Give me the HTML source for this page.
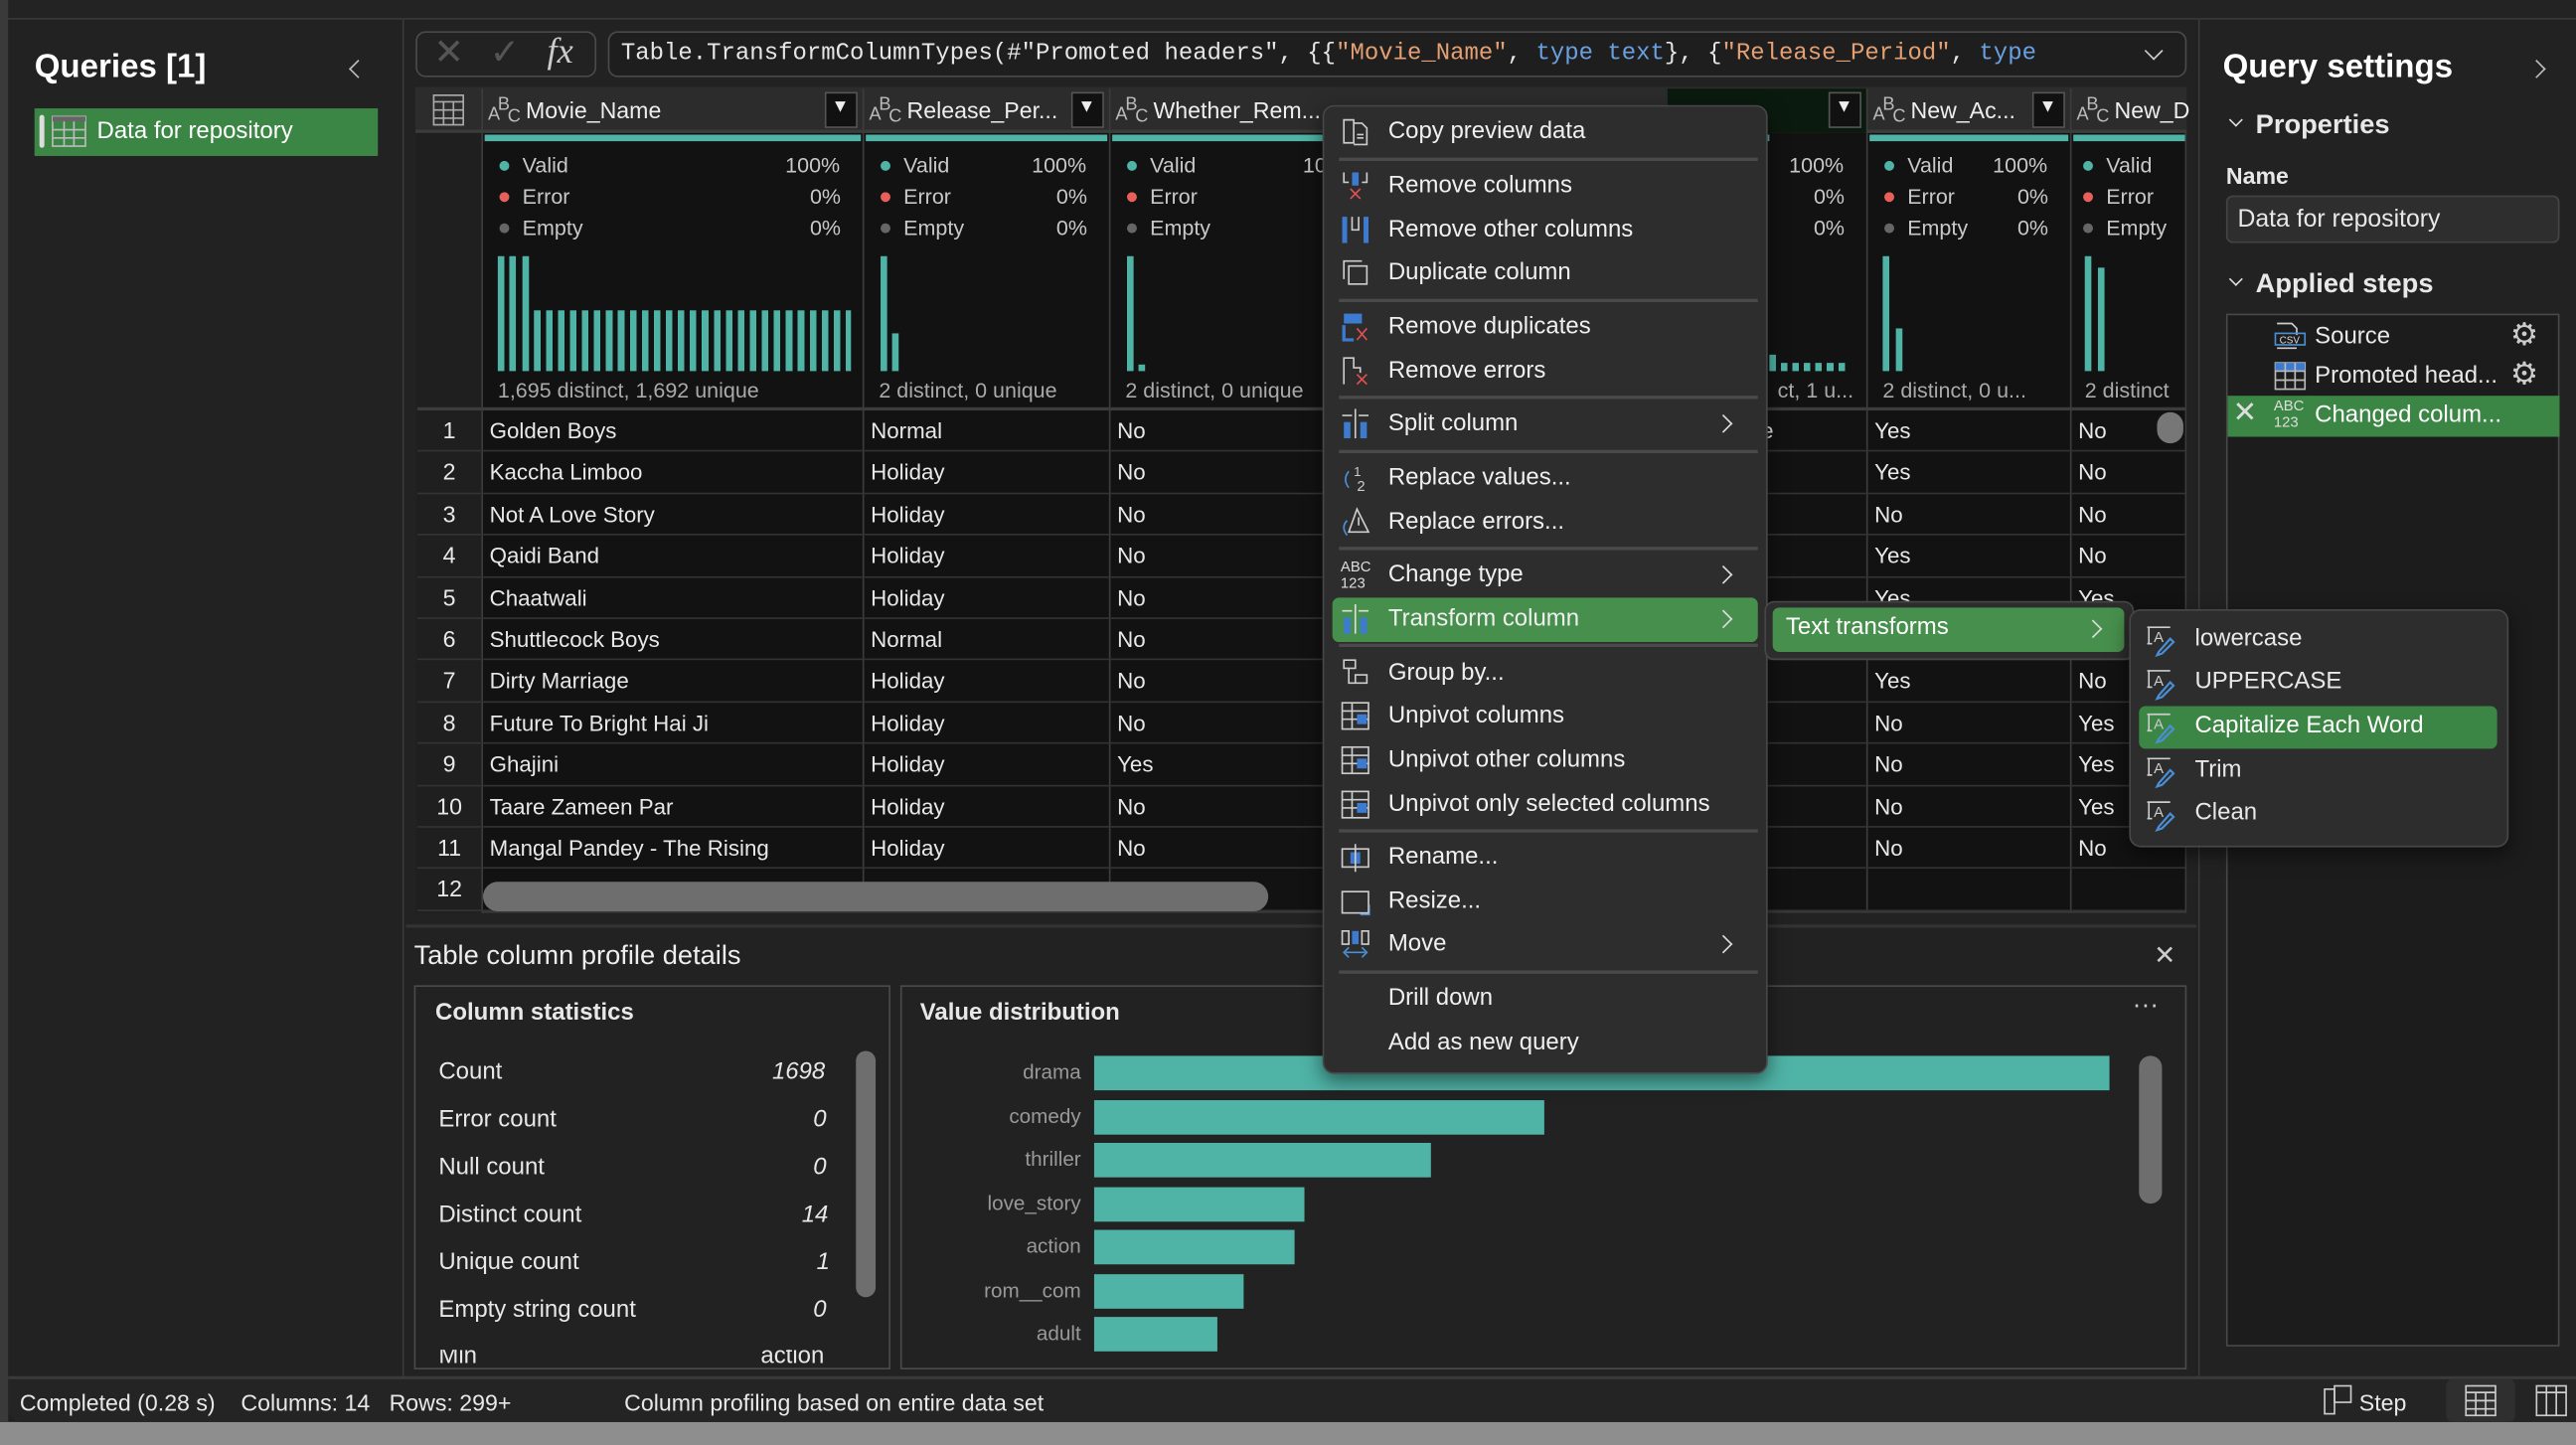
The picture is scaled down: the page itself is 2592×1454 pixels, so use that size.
<!DOCTYPE html>
<html><head><meta charset="utf-8">
<style>
*{box-sizing:border-box;margin:0;padding:0}
html,body{width:2592px;height:1454px;overflow:hidden;background:#8a8a8a}
#s{position:absolute;left:0;top:0;width:1568px;height:880px;transform:scale(1.65306,1.65227);transform-origin:0 0;font-family:"Liberation Sans",sans-serif;color:#e8e8e8;font-size:14px;background:#202020}
.a{position:absolute}
.t{position:absolute;white-space:nowrap}
.bx{position:absolute;border:1px solid #4a4a4a}
.teal{background:#4fb3a6}
.cell{position:absolute;height:25px;line-height:25px;white-space:nowrap;font-size:13.5px;padding-left:4px;color:#e8e8e8}
.mi{position:absolute;left:845px;height:20px;line-height:20px;font-size:14.5px;white-space:nowrap;color:#f0f0f0}
.ms{position:absolute;left:815px;width:255px;height:2px;background:#4a4a4a}
.ic{position:absolute;left:816px;width:18px;height:18px}
.chev{position:absolute;width:8px;height:8px;border-right:1.5px solid #ddd;border-top:1.5px solid #ddd;transform:rotate(45deg)}
.dot{display:inline-block;width:6px;height:6px;border-radius:3px;margin-right:8px;vertical-align:1px}
.pr{position:absolute;font-size:13px;color:#c8c8c8;white-space:nowrap}
.abc{position:absolute;width:20px;height:20px;color:#bbb;font-size:11px}
.abc b{position:absolute;font-weight:normal}
.hd{position:absolute;top:59px;font-size:14px;color:#eee;white-space:nowrap}
</style></head><body><div id="s">
<div class="a" style="left:0;top:866px;width:1568px;height:14px;background:#8e8e8e"></div>
<div class="a" style="left:0;top:0;width:1568px;height:12px;background:#232323;border-bottom:1px solid #3a3a3a"></div>
<div class="a" style="left:0;top:0;width:5px;height:866px;background:#3a3a3a"></div>
<div class="a" style="left:5px;top:12px;width:241px;height:826px;background:#222;border-right:1px solid #3a3a3a"></div>
<div class="t" style="left:21px;top:30px;font-size:20px;font-weight:bold;color:#fff">Queries [1]</div>
<div class="chev" style="left:214px;top:38px;transform:rotate(-135deg);border-color:#bbb"></div>
<div class="a" style="left:21px;top:66px;width:209px;height:29px;background:#3c8645"></div>
<div class="a" style="left:24px;top:70px;width:3px;height:20px;background:#ddd;border-radius:2px"></div>
<svg class="a" style="left:31px;top:70px" width="22" height="20"><rect x="1" y="1" width="20" height="18" fill="none" stroke="#bbb"/><rect x="1" y="1" width="20" height="3" fill="#666"/><path d="M1 9H21M1 14H21M8 4V19M14 4V19" stroke="#bbb"/></svg>
<div class="t" style="left:59px;top:72px;font-size:14.5px;color:#fff">Data for repository</div>
<div class="a" style="left:247px;top:12px;width:1090px;height:826px;background:#222"></div>
<div class="a" style="left:253px;top:19px;width:110px;height:28px;border:1px solid #4a4a4a;border-radius:6px"></div>
<div class="t" style="left:264px;top:19px;font-size:22px;color:#555">✕</div>
<div class="t" style="left:298px;top:19px;font-size:22px;color:#555">✓</div>
<div class="t" style="left:333px;top:18px;font-size:22px;font-style:italic;font-family:'Liberation Serif',serif;color:#ccc">fx</div>
<div class="a" style="left:370px;top:19px;width:961px;height:28px;border:1px solid #4a4a4a;border-radius:6px;background:#1e1e1e"></div>
<div class="t" style="left:378px;top:25px;font-family:'Liberation Mono',monospace;font-size:14.5px;color:#e6e6e6">Table.TransformColumnTypes(#"Promoted headers", {{<span style="color:#e4a073">"Movie_Name"</span>, <span style="color:#6aa0e0">type</span> <span style="color:#6aa0e0">text</span>}, {<span style="color:#e4a073">"Release_Period"</span>, <span style="color:#6aa0e0">type</span></div>
<div class="chev" style="left:1307px;top:27px;transform:rotate(135deg);border-color:#ccc"></div>
<div class="a" style="left:253px;top:53px;width:1078px;height:503px;background:#121212;border:1px solid #3c3c3c"></div>
<div class="a" style="left:253px;top:53px;width:1078px;height:28px;background:#2c2c2c;border-bottom:2px solid #3c3c3c"></div>
<div class="a" style="left:253px;top:81px;width:40px;height:475px;background:#1f1f1f"></div>
<svg class="a" style="left:263px;top:57px" width="20" height="20"><rect x="1" y="1" width="18" height="18" fill="none" stroke="#aaa"/><path d="M1 5H19M1 10H19M1 15H19M7 5V19M13 5V19" stroke="#aaa"/></svg>
<div class="a" style="left:1015px;top:54px;width:121px;height:27px;background:#0b1a0e"></div>
<div class="abc" style="left:297px;top:58px"><b style="left:0;top:6px">A</b><b style="left:6px;top:0">B</b><b style="left:12px;top:7px">C</b></div>
<div class="hd" style="left:320px">Movie_Name</div>
<div class="a" style="left:502px;top:56px;width:20px;height:22px;background:#111;border:1px solid #555"></div><div class="t" style="left:506px;top:59px;font-size:11px;color:#eee">▼</div>
<div class="abc" style="left:529px;top:58px"><b style="left:0;top:6px">A</b><b style="left:6px;top:0">B</b><b style="left:12px;top:7px">C</b></div>
<div class="hd" style="left:552px">Release_Per...</div>
<div class="a" style="left:652px;top:56px;width:20px;height:22px;background:#111;border:1px solid #555"></div><div class="t" style="left:656px;top:59px;font-size:11px;color:#eee">▼</div>
<div class="abc" style="left:679px;top:58px"><b style="left:0;top:6px">A</b><b style="left:6px;top:0">B</b><b style="left:12px;top:7px">C</b></div>
<div class="hd" style="left:702px">Whether_Rem...</div>
<div class="a" style="left:1113px;top:56px;width:20px;height:22px;background:#111;border:1px solid #555"></div><div class="t" style="left:1117px;top:59px;font-size:11px;color:#eee">▼</div>
<div class="abc" style="left:1140px;top:58px"><b style="left:0;top:6px">A</b><b style="left:6px;top:0">B</b><b style="left:12px;top:7px">C</b></div>
<div class="hd" style="left:1163px">New_Ac...</div>
<div class="a" style="left:1237px;top:56px;width:20px;height:22px;background:#111;border:1px solid #555"></div><div class="t" style="left:1241px;top:59px;font-size:11px;color:#eee">▼</div>
<div class="abc" style="left:1264px;top:58px"><b style="left:0;top:6px">A</b><b style="left:6px;top:0">B</b><b style="left:12px;top:7px">C</b></div>
<div class="hd" style="left:1287px">New_D</div>
<div class="a" style="left:293px;top:54px;width:1px;height:502px;background:#3c3c3c"></div>
<div class="a" style="left:525px;top:54px;width:1px;height:502px;background:#3c3c3c"></div>
<div class="a" style="left:675px;top:54px;width:1px;height:502px;background:#3c3c3c"></div>
<div class="a" style="left:1136px;top:54px;width:1px;height:502px;background:#3c3c3c"></div>
<div class="a" style="left:1260px;top:54px;width:1px;height:502px;background:#3c3c3c"></div>
<div class="a teal" style="left:295px;top:82px;width:229px;height:4px"></div>
<div class="a teal" style="left:527px;top:82px;width:147px;height:4px"></div>
<div class="a teal" style="left:677px;top:82px;width:400px;height:4px"></div>
<div class="a teal" style="left:1138px;top:82px;width:121px;height:4px"></div>
<div class="a teal" style="left:1262px;top:82px;width:68px;height:4px"></div>
<div class="pr" style="left:304px;top:93px"><span class="dot" style="background:#4fb3a6"></span>Valid</div><div class="pr" style="left:478px;top:93px">100%</div>
<div class="pr" style="left:304px;top:112px"><span class="dot" style="background:#e8605a"></span>Error</div><div class="pr" style="left:493px;top:112px">0%</div>
<div class="pr" style="left:304px;top:131px"><span class="dot" style="background:#666"></span>Empty</div><div class="pr" style="left:493px;top:131px">0%</div>
<div class="pr" style="left:536px;top:93px"><span class="dot" style="background:#4fb3a6"></span>Valid</div><div class="pr" style="left:628px;top:93px">100%</div>
<div class="pr" style="left:536px;top:112px"><span class="dot" style="background:#e8605a"></span>Error</div><div class="pr" style="left:643px;top:112px">0%</div>
<div class="pr" style="left:536px;top:131px"><span class="dot" style="background:#666"></span>Empty</div><div class="pr" style="left:643px;top:131px">0%</div>
<div class="pr" style="left:686px;top:93px"><span class="dot" style="background:#4fb3a6"></span>Valid</div><div class="pr" style="left:793px;top:93px">10</div>
<div class="pr" style="left:686px;top:112px"><span class="dot" style="background:#e8605a"></span>Error</div>
<div class="pr" style="left:686px;top:131px"><span class="dot" style="background:#666"></span>Empty</div>
<div class="pr" style="left:1089px;top:93px">100%</div><div class="pr" style="left:1104px;top:112px">0%</div><div class="pr" style="left:1104px;top:131px">0%</div>
<div class="pr" style="left:1147px;top:93px"><span class="dot" style="background:#4fb3a6"></span>Valid</div><div class="pr" style="left:1213px;top:93px">100%</div>
<div class="pr" style="left:1147px;top:112px"><span class="dot" style="background:#e8605a"></span>Error</div><div class="pr" style="left:1228px;top:112px">0%</div>
<div class="pr" style="left:1147px;top:131px"><span class="dot" style="background:#666"></span>Empty</div><div class="pr" style="left:1228px;top:131px">0%</div>
<div class="pr" style="left:1268px;top:93px"><span class="dot" style="background:#4fb3a6"></span>Valid</div>
<div class="pr" style="left:1268px;top:112px"><span class="dot" style="background:#e8605a"></span>Error</div>
<div class="pr" style="left:1268px;top:131px"><span class="dot" style="background:#666"></span>Empty</div>
<div class="a teal" style="left:303px;top:156px;width:4px;height:70px"></div>
<div class="a teal" style="left:310px;top:156px;width:4px;height:70px"></div>
<div class="a teal" style="left:318px;top:156px;width:4px;height:70px"></div>
<div class="a" style="left:325px;top:189px;width:193px;height:37px;background:repeating-linear-gradient(90deg,#4fb3a6 0 4px,transparent 4px 7.3px)"></div>
<div class="a teal" style="left:536px;top:156px;width:4px;height:70px"></div>
<div class="a teal" style="left:543px;top:203px;width:4px;height:23px"></div>
<div class="a teal" style="left:686px;top:156px;width:4px;height:70px"></div>
<div class="a teal" style="left:693px;top:222px;width:4px;height:4px"></div>
<div class="a teal" style="left:1077px;top:216px;width:4px;height:10px"></div>
<div class="a" style="left:1084px;top:221px;width:42px;height:5px;background:repeating-linear-gradient(90deg,#4fb3a6 0 4px,transparent 4px 7px)"></div>
<div class="a teal" style="left:1146px;top:156px;width:4px;height:70px"></div>
<div class="a teal" style="left:1154px;top:200px;width:4px;height:26px"></div>
<div class="a teal" style="left:1269px;top:156px;width:4px;height:70px"></div>
<div class="a teal" style="left:1277px;top:163px;width:4px;height:63px"></div>
<div class="pr" style="left:303px;top:230px;color:#aaa">1,695 distinct, 1,692 unique</div>
<div class="pr" style="left:535px;top:230px;color:#aaa">2 distinct, 0 unique</div>
<div class="pr" style="left:685px;top:230px;color:#aaa">2 distinct, 0 unique</div>
<div class="pr" style="left:1082px;top:230px;color:#aaa">ct, 1 u...</div>
<div class="pr" style="left:1146px;top:230px;color:#aaa">2 distinct, 0 u...</div>
<div class="pr" style="left:1269px;top:230px;color:#aaa">2 distinct</div>
<div class="a" style="left:254px;top:248px;width:1076px;height:2px;background:#3c3c3c"></div>
<div id="rows"></div>
<div class="a" style="left:1313px;top:251px;width:16px;height:19px;border-radius:8px;background:#777"></div>
<div class="a" style="left:294px;top:537px;width:478px;height:18px;border-radius:9px;background:#6e6e6e"></div>
<div class="a" style="left:247px;top:563px;width:1090px;height:2px;background:#333"></div>
<div class="t" style="left:252px;top:573px;font-size:16.5px;color:#eee">Table column profile details</div>
<div class="t" style="left:1311px;top:572px;font-size:16px;color:#ccc">✕</div>
<div class="bx" style="left:252px;top:600px;width:290px;height:234px"></div>
<div class="t" style="left:265px;top:609px;font-size:14.5px;font-weight:bold">Column statistics</div>
<div class="a" style="left:521px;top:640px;width:12px;height:150px;border-radius:6px;background:#6e6e6e"></div>
<div class="bx" style="left:548px;top:600px;width:783px;height:234px"></div>
<div class="t" style="left:560px;top:609px;font-size:14.5px;font-weight:bold">Value distribution</div>
<div class="t" style="left:1298px;top:604px;font-size:16px;color:#ccc">···</div>
<div class="a" style="left:1302px;top:643px;width:14px;height:90px;border-radius:7px;background:#6e6e6e"></div>
<div class="t" style="left:267px;top:645px;font-size:14.5px">Count</div><div class="t" style="left:470px;top:645px;font-size:14.5px;font-style:italic">1698</div>
<div class="t" style="left:267px;top:674px;font-size:14.5px">Error count</div><div class="t" style="left:495px;top:674px;font-size:14.5px;font-style:italic">0</div>
<div class="t" style="left:267px;top:703px;font-size:14.5px">Null count</div><div class="t" style="left:495px;top:703px;font-size:14.5px;font-style:italic">0</div>
<div class="t" style="left:267px;top:732px;font-size:14.5px">Distinct count</div><div class="t" style="left:488px;top:732px;font-size:14.5px;font-style:italic">14</div>
<div class="t" style="left:267px;top:761px;font-size:14.5px">Unique count</div><div class="t" style="left:497px;top:761px;font-size:14.5px;font-style:italic">1</div>
<div class="t" style="left:267px;top:790px;font-size:14.5px">Empty string count</div><div class="t" style="left:495px;top:790px;font-size:14.5px;font-style:italic">0</div>
<div class="a" style="left:253px;top:822px;width:287px;height:11px;overflow:hidden"><div class="t" style="left:14px;top:-4px;font-size:14.5px">Min</div><div class="t" style="left:210px;top:-4px;font-size:14.5px">action</div></div>
<div class="t" style="left:620px;top:646px;font-size:12.5px;color:#999;width:38px;text-align:right">drama</div><div class="a teal" style="left:666px;top:643px;width:618px;height:21px"></div>
<div class="t" style="left:600px;top:673px;font-size:12.5px;color:#999;width:58px;text-align:right">comedy</div><div class="a teal" style="left:666px;top:670px;width:274px;height:21px"></div>
<div class="t" style="left:600px;top:699px;font-size:12.5px;color:#999;width:58px;text-align:right">thriller</div><div class="a teal" style="left:666px;top:696px;width:205px;height:21px"></div>
<div class="t" style="left:580px;top:726px;font-size:12.5px;color:#999;width:78px;text-align:right">love_story</div><div class="a teal" style="left:666px;top:723px;width:128px;height:21px"></div>
<div class="t" style="left:600px;top:752px;font-size:12.5px;color:#999;width:58px;text-align:right">action</div><div class="a teal" style="left:666px;top:749px;width:122px;height:21px"></div>
<div class="t" style="left:580px;top:779px;font-size:12.5px;color:#999;width:78px;text-align:right">rom__com</div><div class="a teal" style="left:666px;top:776px;width:91px;height:21px"></div>
<div class="t" style="left:600px;top:805px;font-size:12.5px;color:#999;width:58px;text-align:right">adult</div><div class="a teal" style="left:666px;top:802px;width:75px;height:21px"></div>
<div class="a" style="left:1338px;top:12px;width:230px;height:826px;background:#222;border-left:1px solid #3a3a3a"></div>
<div class="t" style="left:1353px;top:30px;font-size:20px;font-weight:bold;color:#fff">Query settings</div>
<div class="chev" style="left:1540px;top:38px;border-color:#bbb"></div>
<div class="chev" style="left:1358px;top:70px;transform:rotate(135deg);width:6px;height:6px"></div>
<div class="t" style="left:1373px;top:67px;font-size:16.5px;font-weight:bold">Properties</div>
<div class="t" style="left:1355px;top:99px;font-size:14px;font-weight:bold">Name</div>
<div class="a" style="left:1355px;top:119px;width:203px;height:29px;background:#2e2e2e;border:1px solid #444;border-radius:4px"></div>
<div class="t" style="left:1362px;top:125px;font-size:15px">Data for repository</div>
<div class="chev" style="left:1358px;top:167px;transform:rotate(135deg);width:6px;height:6px"></div>
<div class="t" style="left:1373px;top:164px;font-size:16.5px;font-weight:bold">Applied steps</div>
<div class="bx" style="left:1355px;top:191px;width:203px;height:629px;background:#1c1c1c;border-color:#484848"></div>
<svg class="a" style="left:1384px;top:196px" width="20" height="18"><path d="M2 1H11L14 4V8" fill="none" stroke="#ccc"/><rect x="1" y="7" width="18" height="7" fill="none" stroke="#4a8fd6"/><text x="3.5" y="13" font-size="6" fill="#ddd" font-family="Liberation Sans">CSV</text><path d="M2 16H14" stroke="#ccc"/></svg>
<div class="t" style="left:1409px;top:197px;font-size:14.5px">Source</div>
<div class="t" style="left:1528px;top:193px;font-size:19px;color:#ccc">⚙</div>
<svg class="a" style="left:1384px;top:220px" width="20" height="18"><rect x="1" y="1" width="18" height="16" fill="none" stroke="#bbb"/><rect x="1" y="1" width="18" height="5" fill="#3d7bd0"/><path d="M1 6H19M1 11.5H19M7 1V17M13 1V17" stroke="#bbb"/></svg>
<div class="t" style="left:1409px;top:221px;font-size:14.5px">Promoted head...</div>
<div class="t" style="left:1528px;top:217px;font-size:19px;color:#ccc">⚙</div>
<div class="a" style="left:1356px;top:241px;width:202px;height:25px;background:#3c8645"></div>
<div class="t" style="left:1359px;top:241px;font-size:18px;color:#ddd">✕</div>
<div class="t" style="left:1384px;top:242px;font-size:9px;line-height:10px;color:#ddd">ABC<br>123</div>
<div class="t" style="left:1409px;top:245px;font-size:14.5px;color:#fff">Changed colum...</div>
<div class="a" style="left:5px;top:838px;width:1563px;height:28px;background:#242424;border-top:2px solid #3a3a3a;border-radius:0 0 0 8px"></div>
<div class="t" style="left:12px;top:846px;font-size:14px">Completed (0.28 s)&nbsp;&nbsp;&nbsp; Columns: 14&nbsp;&nbsp; Rows: 299+</div>
<div class="t" style="left:380px;top:846px;font-size:14px">Column profiling based on entire data set</div>
<svg class="a" style="left:1413px;top:843px" width="20" height="20"><rect x="2" y="3" width="6" height="15" fill="none" stroke="#ccc"/><rect x="8" y="1" width="10" height="10" fill="none" stroke="#ccc"/></svg>
<div class="t" style="left:1436px;top:846px;font-size:14px">Step</div>
<div class="a" style="left:1489px;top:840px;width:42px;height:26px;background:#2f2f2f;border-radius:4px"></div>
<svg class="a" style="left:1500px;top:843px" width="20" height="20"><rect x="1" y="1" width="18" height="18" fill="none" stroke="#ccc"/><path d="M1 5H19M1 10H19M1 15H19M7 5V19M13 5V19" stroke="#ccc"/></svg>
<svg class="a" style="left:1543px;top:843px" width="20" height="20"><rect x="1" y="1" width="18" height="18" fill="none" stroke="#ccc"/><path d="M1 5H19M7 1V19M13 1V19" stroke="#ccc"/></svg>

<div class="a" style="left:805px;top:64px;width:271px;height:590px;background:#2d2d2d;border:1px solid #474747;border-radius:7px;box-shadow:0 4px 12px rgba(0,0,0,.5)"></div>
<div class="ms" style="top:96px"></div><div class="ms" style="top:182px"></div><div class="ms" style="top:241px"></div><div class="ms" style="top:274px"></div><div class="ms" style="top:333px"></div><div class="ms" style="top:392px"></div><div class="ms" style="top:505px"></div><div class="ms" style="top:591px"></div>
<div class="a" style="left:811px;top:364px;width:259px;height:27px;background:#478f4c;border-radius:4px"></div>
<div class="mi" style="top:70px">Copy preview data</div>
<div class="mi" style="top:103px">Remove columns</div>
<div class="mi" style="top:130px">Remove other columns</div>
<div class="mi" style="top:156px">Duplicate column</div>
<div class="mi" style="top:189px">Remove duplicates</div>
<div class="mi" style="top:216px">Remove errors</div>
<div class="mi" style="top:248px">Split column</div>
<div class="mi" style="top:281px">Replace values...</div>
<div class="mi" style="top:308px">Replace errors...</div>
<div class="mi" style="top:340px">Change type</div>
<div class="mi" style="top:367px">Transform column</div>
<div class="mi" style="top:400px">Group by...</div>
<div class="mi" style="top:426px">Unpivot columns</div>
<div class="mi" style="top:453px">Unpivot other columns</div>
<div class="mi" style="top:480px">Unpivot only selected columns</div>
<div class="mi" style="top:512px">Rename...</div>
<div class="mi" style="top:539px">Resize...</div>
<div class="mi" style="top:565px">Move</div>
<div class="mi" style="top:598px">Drill down</div>
<div class="mi" style="top:625px">Add as new query</div>
<div class="chev" style="left:1045px;top:254px"></div>
<div class="chev" style="left:1045px;top:346px"></div>
<div class="chev" style="left:1045px;top:373px"></div>
<div class="chev" style="left:1045px;top:571px"></div>
<svg class="ic" style="top:71px" viewBox="0 0 18 18"><path d="M2 2H8V16H2Z M8 4H13L16 7V17H8" fill="none" stroke="#ccc"/><path d="M10 11H14M10 13H14" stroke="#ccc"/></svg>
<svg class="ic" style="top:104px" viewBox="0 0 18 18"><path d="M2 1V7H5M16 1V7H13" fill="none" stroke="#ccc"/><rect x="7" y="1" width="4" height="8" fill="#3d7bd0"/><path d="M6 11L12 17M12 11L6 17" stroke="#e05050"/></svg>
<svg class="ic" style="top:131px" viewBox="0 0 18 18"><rect x="1" y="1" width="3" height="16" fill="#3d7bd0"/><rect x="14" y="1" width="3" height="16" fill="#3d7bd0"/><path d="M7 1V9H11V1" fill="none" stroke="#ccc"/></svg>
<svg class="ic" style="top:157px" viewBox="0 0 18 18"><path d="M2 13V2H13" fill="none" stroke="#ccc"/><rect x="5" y="5" width="11" height="11" fill="none" stroke="#ccc"/></svg>
<svg class="ic" style="top:190px" viewBox="0 0 18 18"><rect x="2" y="1" width="11" height="6" fill="#3d7bd0"/><path d="M2 8V17H8" fill="none" stroke="#3d7bd0" stroke-width="2"/><path d="M10 10L16 17M16 10L10 17" stroke="#e05050"/></svg>
<svg class="ic" style="top:217px" viewBox="0 0 18 18"><path d="M2 17V1H8V7H12V10" fill="none" stroke="#ccc"/><path d="M10 11L16 17M16 11L10 17" stroke="#e05050"/></svg>
<svg class="ic" style="top:249px" viewBox="0 0 18 18"><rect x="2" y="8" width="4" height="10" fill="#3d7bd0"/><rect x="12" y="8" width="4" height="10" fill="#3d7bd0"/><path d="M9 0V18M1 4H7M11 4H17" stroke="#ccc"/></svg>
<svg class="ic" style="top:282px" viewBox="0 0 18 18"><path d="M5 5Q1 10 5 15" fill="none" stroke="#4a8fd6"/><text x="8" y="8" font-size="8" fill="#ccc">1</text><text x="10" y="17" font-size="9" fill="#ccc">2</text></svg>
<svg class="ic" style="top:309px" viewBox="0 0 18 18"><path d="M4 8Q0 12 4 17" fill="none" stroke="#4a8fd6"/><path d="M10 1L17 15H5Z" fill="none" stroke="#ccc"/><path d="M11 6V11" stroke="#ccc"/></svg>
<div class="t" style="left:816px;top:340px;font-size:9px;line-height:10px;color:#ddd">ABC<br>123</div>
<svg class="ic" style="top:368px" viewBox="0 0 18 18"><rect x="2" y="8" width="4" height="10" fill="#3d7bd0"/><rect x="12" y="8" width="4" height="10" fill="#3d7bd0"/><path d="M9 0V18M1 4H7M11 4H17" stroke="#ddd"/></svg>
<svg class="ic" style="top:401px" viewBox="0 0 18 18"><path d="M2 1H9V6H2ZM5 6V15H16V10H9V15" fill="none" stroke="#ccc"/></svg>
<svg class="ic" style="top:427px" viewBox="0 0 18 18"><rect x="1" y="1" width="16" height="16" fill="none" stroke="#ccc"/><path d="M1 6H17M1 11H17M7 1V17" stroke="#ccc"/><rect x="10" y="8" width="6" height="6" fill="#3d7bd0"/></svg>
<svg class="ic" style="top:454px" viewBox="0 0 18 18"><rect x="1" y="1" width="16" height="16" fill="none" stroke="#ccc"/><path d="M1 6H17M1 11H17M7 1V17" stroke="#ccc"/><rect x="10" y="8" width="6" height="6" fill="#3d7bd0"/></svg>
<svg class="ic" style="top:481px" viewBox="0 0 18 18"><rect x="1" y="1" width="16" height="16" fill="none" stroke="#ccc"/><path d="M1 6H17M1 11H17M7 1V17" stroke="#ccc"/><rect x="10" y="8" width="6" height="6" fill="#3d7bd0"/></svg>
<svg class="ic" style="top:513px" viewBox="0 0 18 18"><rect x="1" y="4" width="16" height="11" fill="none" stroke="#ccc"/><rect x="6" y="6" width="6" height="7" fill="#3d7bd0"/><path d="M9 1V18" stroke="#ccc"/></svg>
<svg class="ic" style="top:540px" viewBox="0 0 18 18"><rect x="1" y="3" width="16" height="13" fill="none" stroke="#ccc"/><path d="M12 17H18V11" fill="none" stroke="#4a8fd6"/></svg>
<svg class="ic" style="top:566px" viewBox="0 0 18 18"><rect x="1" y="1" width="4" height="8" fill="none" stroke="#ccc"/><rect x="7" y="1" width="4" height="8" fill="#3d7bd0"/><rect x="13" y="1" width="4" height="8" fill="none" stroke="#ccc"/><path d="M3 14H15M5 11L2 14L5 17M13 11L16 14L13 17" fill="none" stroke="#4a8fd6"/></svg>
<div class="a" style="left:1074px;top:366px;width:225px;height:36px;background:#2d2d2d;border:1px solid #474747;border-radius:6px"></div>
<div class="a" style="left:1079px;top:370px;width:214px;height:27px;background:#478f4c;border-radius:4px"></div>
<div class="t" style="left:1087px;top:374px;font-size:14.5px;color:#fff">Text transforms</div>
<div class="chev" style="left:1270px;top:379px"></div>
<div class="a" style="left:1296px;top:371px;width:231px;height:145px;background:#2d2d2d;border:1px solid #474747;border-radius:7px;box-shadow:0 4px 12px rgba(0,0,0,.5)"></div>
<div class="a" style="left:1302px;top:430px;width:218px;height:26px;background:#3c8645;border-radius:4px"></div>
<div class="t" style="left:1336px;top:381px;font-size:14.5px">lowercase</div>
<div class="t" style="left:1336px;top:407px;font-size:14.5px">UPPERCASE</div>
<div class="t" style="left:1336px;top:434px;font-size:14.5px;color:#fff">Capitalize Each Word</div>
<div class="t" style="left:1336px;top:461px;font-size:14.5px">Trim</div>
<div class="t" style="left:1336px;top:487px;font-size:14.5px">Clean</div>
<svg class="a" style="left:1306px;top:380px" width="22" height="130"><defs><g id="ti"><path d="M1 2H15M2 2V12M1 12H4" fill="none" stroke="#ccc"/><text x="5" y="11" font-size="9" fill="#ccc" font-family="Liberation Sans">A</text><path d="M8 17L15 9L17 11L10 18L7 19Z" fill="none" stroke="#4a8fd6" stroke-width="1.3"/></g></defs><use href="#ti" y="0"/><use href="#ti" y="26.5"/><use href="#ti" y="53"/><use href="#ti" y="80"/><use href="#ti" y="106.5"/></svg>
</div>
<script>
var d=[["Golden Boys","Normal","No","e","Yes","No"],["Kaccha Limboo","Holiday","No","","Yes","No"],["Not A Love Story","Holiday","No","","No","No"],["Qaidi Band","Holiday","No","","Yes","No"],["Chaatwali","Holiday","No","","Yes","Yes"],["Shuttlecock Boys","Normal","No","","",""],["Dirty Marriage","Holiday","No","","Yes","No"],["Future To Bright Hai Ji","Holiday","No","","No","Yes"],["Ghajini","Holiday","Yes","","No","Yes"],["Taare Zameen Par","Holiday","No","","No","Yes"],["Mangal Pandey - The Rising","Holiday","No","","No","No"],["","","","","",""]];
var h="",xs=[294,526,676,1068,1137,1261];
for(var i=0;i<12;i++){var y=250+i*25.4;
h+='<div class="a" style="left:254px;top:'+(y+24.4)+'px;width:1076px;height:1px;background:#333"></div>';
h+='<div class="cell" style="left:254px;top:'+y+'px;width:39px;text-align:center;padding:0;font-size:14px">'+(i+1)+'</div>';
for(var j=0;j<6;j++)if(d[i][j])h+='<div class="cell" style="left:'+xs[j]+'px;top:'+y+'px">'+d[i][j]+'</div>';}
document.getElementById('rows').outerHTML=h;
</script>
</body></html>
